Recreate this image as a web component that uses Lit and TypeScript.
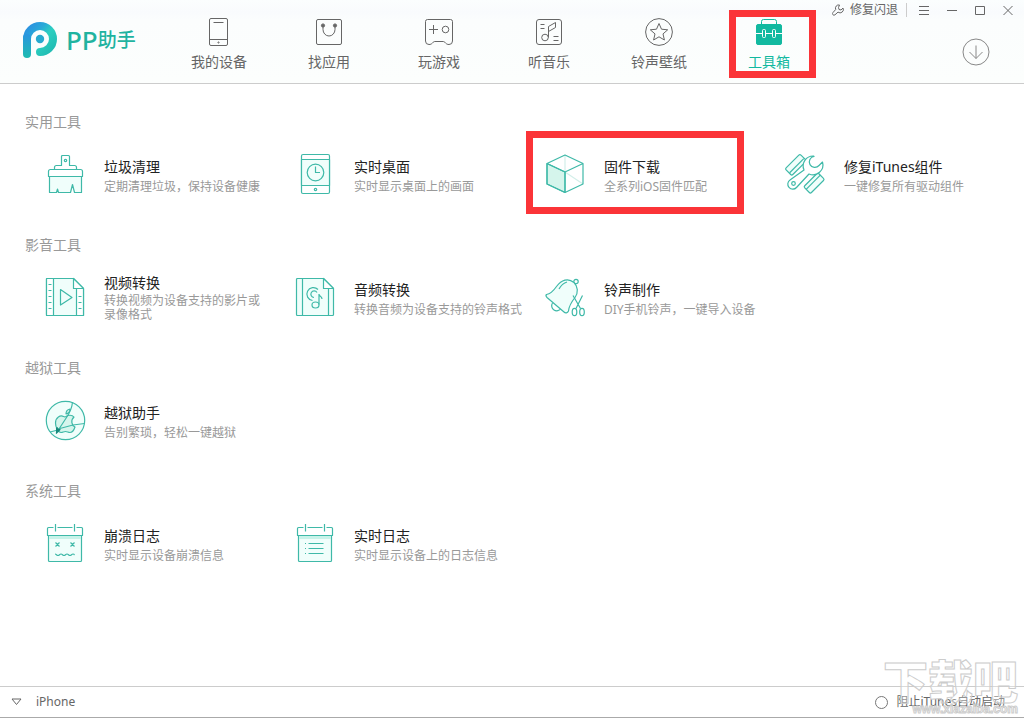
import { LitElement, html, svg, css, nothing } from "lit";
import type { SVGTemplateResult } from "lit";
import { customElement, property, state } from "lit/decorators.js";
import { classMap } from "lit/directives/class-map.js";

/* ---------- icon artwork ---------- */

const navIcons: Record<string, SVGTemplateResult> = {
  device: svg`<rect x="4.5" y=".5" width="18" height="27" rx="1.5"/><path d="M4.5 21.5h18M8.5 4.5h10"/><circle cx="13.5" cy="24.5" r=".6"/>`,
  apps: svg`<rect x="1.5" y="1.5" width="25" height="25" rx="1.5"/><path d="M8 8v3.500a6 6.500 0 0 0 12 0V8"/><circle class="solid" cx="8" cy="7.500" r="1.600"/><circle class="solid" cx="20" cy="7.500" r="1.600"/>`,
  games: svg`<path d="M2.500 1.500h23a2 2 0 0 1 2 2V23a3.500 3.500 0 0 1-3.500 3.500c-1.500 0-2.500-.5-3.500-1.500-.8-1-1.500-1.500-2.500-1.500h-8c-1 0-1.700.5-2.500 1.500-1 1-2 1.500-3.500 1.500A3.500 3.500 0 0 1 .5 23V3.500a2 2 0 0 1 2-2zM4 11.500h9M8.500 7v9"/><circle cx="20.500" cy="11.500" r="3.300"/>`,
  music: svg`<rect x="1.500" y="1.500" width="25" height="25" rx="2.500"/><path d="M13.500 19.500V8.500l7-4v5l-7 4M5.500 6.500h4M5.500 10.500h4M18.500 18.500h5M18.500 22.500h5"/><circle cx="10" cy="19.500" r="3.300"/>`,
  ringtone: svg`<circle cx="14" cy="14" r="13.400"/><path d="M14 5.500l2.500 5.700 6.200.6-4.700 4.100 1.400 6.100-5.400-3.200-5.400 3.200 1.400-6.100-4.700-4.100 6.200-.6z"/>`,
  toolbox: svg`<path d="M6.500 6.500v-3a2 2 0 0 1 2-2h11a2 2 0 0 1 2 2v3"/><rect class="solid" x="1.500" y="6.500" width="25" height="20" rx="1.500"/><path class="cut" d="M1 15.500h6.500M10.500 15.500h7M20.500 15.500H27"/><rect class="cut" x="7.500" y="11.500" width="3" height="8" rx="1"/><rect class="cut" x="17.500" y="11.500" width="3" height="8" rx="1"/>`,
};

const toolIcons: Record<string, SVGTemplateResult> = {
  brush: svg`<path class="tint" d="M5.500 23.500v16h7l1-3.500 1 3.500h12l2-8 2 8h7v-16z"/><path class="paper" d="M17.500 12.500v-9a1 1 0 0 1 1-1h6a1 1 0 0 1 1 1v9h5a2 2 0 0 1 2 2v2h4a2 2 0 0 1 2 2v5h-34v-5a2 2 0 0 1 2-2h4v-2a2 2 0 0 1 2-2zM10.500 16.500h22"/><circle cx="21.500" cy="7.500" r="1.200"/>`,
  desktop: svg`<rect class="paper" x="7.500" y="1.500" width="28" height="39" rx="1.500"/><path class="tint" d="M7.500 6.500h28v26h-28z"/><circle cx="21.500" cy="19.500" r="8.300"/><path d="M21.500 13.500v6h4.500"/><circle cx="21.500" cy="36.500" r="1.200"/>`,
  cube: svg`<path class="faint" d="M21 2v20M21 19l18 12"/><path class="face" d="M3 10.500L21 19v20.500L3 31z"/><path d="M21 2l18 8.500V31l-18 8.500L3 31V10.500zM3 10.500L21 19l18-8.500M21 19v20.500"/>`,
  repair: svg`<g transform="rotate(-45 12 12)"><rect class="tint" x="1.500" y="7" width="21" height="9.500" rx="1.500"/><path d="M2 13h20"/></g><g transform="rotate(-45 31 31)"><rect class="tint" x="21" y="25" width="20" height="9.500" rx="1.500"/><path d="M21 28.500h20"/></g><path class="paper" d="M29.500 3A10 10 0 0 0 20 17L6 27a5 5 0 1 0 6.500 7.500L25 21A10 10 0 0 0 38.500 9l-3.500 3.500a5.500 5.500 0 1 1-5-9z"/><circle cx="9.500" cy="30.500" r="1.800"/>`,
  video: svg`<path class="tint" d="M3.500 2.500h26l10 10v27h-36a1 1 0 0 1-1-1v-35a1 1 0 0 1 1-1z"/><path class="paper" d="M2.500 2.500h7v37h-7zM32.500 12.500h7v27h-7zM29.500 2.500v10h10z"/><path d="M4.500 8.500h3M4.500 14.500h3M4.500 20.500h3M4.500 26.500h3M4.500 32.500h3M34.500 20.500h3M34.500 26.500h3M34.500 32.500h3M16.500 13.500L28 21.500l-11.500 7.500z"/>`,
  audio: svg`<path class="tint" d="M3.500 2.500h26l10 10v26a1 1 0 0 1-1 1h-35a1 1 0 0 1-1-1v-35a1 1 0 0 1 1-1z"/><path class="paper" d="M29.500 2.500v10h10z"/><path d="M8.500 2.500v37M34.500 12.500v27M25 18v10.500M25 18c0 2.500 3 2 3 5M24 13.500a6.500 6.500 0 1 0-5.500 11M23 16.500a3.300 3.300 0 1 0-3 5"/><ellipse cx="21.500" cy="29" rx="3.500" ry="3"/>`,
  bell: svg`<path d="M8.500 27a5 5 0 0 0 8.500 5.500"/><circle cx="32" cy="5.500" r="2.200"/><path class="tint" d="M2.500 18.500c4-.5 6.500-3 10-8C17.500 4 24 1.500 30 6.500c4 4 4.500 10 1 15-4 5-6 8-6.500 13.500-1 2-3 2.500-4.500 1L3 21.500c-1-1-1-2.500-.5-3zM15 13c2-3.500 4.500-6 8-7"/><path class="paper" d="M29 19.500l7.500 13M38.500 19.500L32 32.500"/><ellipse class="paper" cx="30.500" cy="36" rx="2.300" ry="3.700"/><ellipse class="paper" cx="38" cy="36" rx="2.300" ry="3.700"/>`,
  jailbreak: svg`<circle class="tint" cx="21.500" cy="21.500" r="19.200"/><path class="face" d="M22 17.500c2-1.500 6-2 8 .5-3.500 3-2.500 8.500 1 10-1 3-3 5.500-5 5.500-2 0-2.500-1-4.500-1s-2.500 1-4.500 1c-3 0-5.500-5.500-5.500-9.500 0-6 5-8 8-6.500 1 .5 1.800.5 2.500 0zM22 15c0-2.500 1.500-4.500 4-5 0 2.500-1.500 4.500-4 5z"/><path d="M28.500 3c-.5 7-3 11-6 15.500L14 31.500M40.500 24.500L29 26l-15 4M6 33l8-2"/><path class="dark" d="M12 29.500l4 1-4 4M13 28l1 5"/>`,
  crash: svg`<path class="tint" d="M4.500 13.500h33v25a1 1 0 0 1-1 1h-31a1 1 0 0 1-1-1z"/><path class="faceonly" d="M5 14h32v3H5z"/><path class="paper" d="M9.500 5.500h-5a1 1 0 0 0-1 1v7h35v-7a1 1 0 0 0-1-1h-5M13.500 5.500h15M11.500 2v7.500M30.500 2v7.500"/><path d="M11.500 20.500l4 4M15.500 20.500l-4 4M26.500 20.500l4 4M30.500 20.500l-4 4M11 32c1.500 0 1.500 1.500 3 1.500S15.500 32 17 32s1.500 1.500 3 1.500S21.500 32 23 32s1.500 1.500 3 1.500 1.500-1.500 3-1.500 1 .5 1.500 1"/>`,
  log: svg`<path class="tint" d="M4.500 13.500h33v25a1 1 0 0 1-1 1h-31a1 1 0 0 1-1-1z"/><path class="faceonly" d="M5 14h32v3H5z"/><path class="paper" d="M9.500 5.500h-5a1 1 0 0 0-1 1v7h35v-7a1 1 0 0 0-1-1h-5M13.500 5.500h15M11.500 2v7.500M30.500 2v7.500"/><path d="M14.500 21.500h15M14.500 26.500h15M14.500 31.500h15M11 21.500h1M11 26.500h1M11 31.500h1"/>`,
};

/* ---------- data ---------- */

interface Tool {
  icon: string;
  name: string;
  lines: string[];
  marked?: boolean;
}

const navItems = [
  { id: "device", label: "我的设备" },
  { id: "apps", label: "找应用" },
  { id: "games", label: "玩游戏" },
  { id: "music", label: "听音乐" },
  { id: "ringtone", label: "铃声壁纸" },
  { id: "toolbox", label: "工具箱", marked: true },
];

const sections: { title: string; tools: Tool[] }[] = [
  {
    title: "实用工具",
    tools: [
      { icon: "brush", name: "垃圾清理", lines: ["定期清理垃圾，保持设备健康"] },
      { icon: "desktop", name: "实时桌面", lines: ["实时显示桌面上的画面"] },
      { icon: "cube", name: "固件下载", lines: ["全系列iOS固件匹配"], marked: true },
      { icon: "repair", name: "修复iTunes组件", lines: ["一键修复所有驱动组件"] },
    ],
  },
  {
    title: "影音工具",
    tools: [
      { icon: "video", name: "视频转换", lines: ["转换视频为设备支持的影片或", "录像格式"] },
      { icon: "audio", name: "音频转换", lines: ["转换音频为设备支持的铃声格式"] },
      { icon: "bell", name: "铃声制作", lines: ["DIY手机铃声，一键导入设备"] },
    ],
  },
  {
    title: "越狱工具",
    tools: [{ icon: "jailbreak", name: "越狱助手", lines: ["告别繁琐，轻松一键越狱"] }],
  },
  {
    title: "系统工具",
    tools: [
      { icon: "crash", name: "崩溃日志", lines: ["实时显示设备崩溃信息"] },
      { icon: "log", name: "实时日志", lines: ["实时显示设备上的日志信息"] },
    ],
  },
];

/* ---------- one tool entry ---------- */

@customElement("tool-item")
export class ToolItem extends LitElement {
  @property({ attribute: false }) tool!: Tool;

  static styles = css`
    :host {
      display: block;
      position: relative;
    }
    .tool {
      display: flex;
      align-items: center;
      gap: 18px;
      width: 100%;
      height: 80px;
      padding: 0;
      border: 0;
      background: none;
      font: inherit;
      text-align: left;
      cursor: pointer;
    }
    .icon {
      flex: none;
      width: 42px;
      height: 42px;
      fill: none;
      stroke: #3fb9a8;
      stroke-width: 1.2;
      stroke-linejoin: round;
    }
    .tint { fill: #f0fefb; }
    .paper { fill: #fff; }
    .face { fill: #d5f5ec; }
    .faceonly { fill: #c8f3e9; stroke: none; }
    .faint { stroke: #d3efe9; }
    .dark { fill: #16897b; stroke: #16897b; }
    .copy {
      display: flex;
      flex-direction: column;
      white-space: nowrap;
    }
    .copy.short {
      gap: 2px;
      padding-top: 2px;
    }
    .name {
      font-size: 14px;
      line-height: 22px;
      color: #222;
    }
    .desc {
      font-size: 12px;
      line-height: 14px;
      color: #999;
    }
    .mark {
      position: absolute;
      inset: -3px 40px 0 -18px;
      border: 7px solid #fb3438;
      pointer-events: none;
    }
  `;

  render() {
    const { icon, name, lines, marked } = this.tool;
    return html`
      <button class="tool" type="button">
        <svg class="icon" viewBox="0 0 42 42" aria-hidden="true">${toolIcons[icon]}</svg>
        <span class=${classMap({ copy: true, short: lines.length === 1 })}>
          <span class="name">${name}</span>
          ${lines.map((line) => html`<span class="desc">${line}</span>`)}
        </span>
      </button>
      ${marked ? html`<span class="mark"></span>` : nothing}
    `;
  }
}

/* ---------- window ---------- */

@customElement("app-root")
export class AppRoot extends LitElement {
  @state() private current = "toolbox";

  static styles = css`
    :host {
      display: flex;
      flex-direction: column;
      box-sizing: border-box;
      min-height: 100vh;
      padding-bottom: 1px;
      background: #fff;
      font-family: "Noto Sans", "Noto Sans CJK SC", sans-serif;
      color: #666;
    }
    button {
      padding: 0;
      border: 0;
      background: none;
      font: inherit;
      color: inherit;
      cursor: pointer;
    }
    svg {
      display: block;
      fill: none;
      stroke: currentColor;
    }
    .header {
      display: flex;
      height: 83px;
      border-bottom: 1px solid #ccc;
      background: linear-gradient(#fbfefe, #f9fbfd 12px, #fbfdfd 20px, #fcfefd);
    }
    .brand {
      display: flex;
      align-items: center;
      gap: 8px;
      box-sizing: border-box;
      width: 164px;
      padding: 0 0 4px 22px;
      color: #1fb3a0;
      font-size: 19px;
      font-weight: 500;
      line-height: 28px;
    }
    .wordmark {
      display: flex;
      align-items: center;
      white-space: nowrap;
    }
    .latin {
      font-size: 26px;
      font-weight: 500;
    }
    .nav {
      display: flex;
    }
    .link {
      position: relative;
      display: flex;
      flex-direction: column;
      align-items: center;
      gap: 6px;
      box-sizing: border-box;
      width: 110px;
      padding-top: 18px;
      font-size: 14px;
      line-height: 20px;
      color: #666;
      text-decoration: none;
    }
    .link.on { color: #12b9a0; }
    .solid { fill: currentColor; }
    .cut { stroke: #fff; }
    .mark {
      position: absolute;
      inset: 10px 8px 5px 15px;
      border: 7px solid #fb3438;
      pointer-events: none;
    }
    .side {
      display: flex;
      flex: 1;
      flex-direction: column;
      align-items: flex-end;
      gap: 18px;
    }
    .titlebar {
      display: flex;
      align-items: center;
      height: 20px;
      padding-right: 2px;
      font-size: 12px;
    }
    .fix {
      display: flex;
      align-items: center;
      gap: 6px;
      padding-right: 8px;
      line-height: 20px;
    }
    .rule {
      width: 1px;
      height: 14px;
      margin-right: 3px;
      background: #ccc;
    }
    .win {
      display: grid;
      place-items: center;
      width: 28px;
      height: 20px;
    }
    .download {
      margin-right: 34px;
      color: #888;
    }
    .main {
      flex: 1;
      padding: 26px 25px;
    }
    .section + .section { margin-top: 19px; }
    .heading {
      margin: 0;
      font-size: 14px;
      font-weight: 400;
      line-height: 24px;
      color: #999;
    }
    .grid {
      display: grid;
      grid-template-columns: 250px 250px 240px 1fr;
      padding-left: 19px;
    }
    .footer {
      position: relative;
      display: flex;
      align-items: center;
      justify-content: space-between;
      height: 30px;
      padding: 0 19px 0 11px;
      border-top: 1px solid #ccc;
      border-bottom: 1px solid #aaa;
      font-size: 12px;
      line-height: 20px;
    }
    .picker {
      display: flex;
      align-items: center;
      gap: 14px;
    }
    .block {
      display: flex;
      align-items: center;
      gap: 8px;
    }
    .radio {
      appearance: none;
      width: 13px;
      height: 13px;
      margin: 0;
      border: 1px solid #777;
      border-radius: 50%;
      background: #fff;
    }
    .watermark {
      position: absolute;
      right: 6px;
      bottom: 2px;
      display: flex;
      flex-direction: column;
      align-items: flex-end;
      color: rgba(255, 255, 255, 0.3);
      -webkit-text-stroke: 1px #ccc;
      pointer-events: none;
    }
    .big {
      font-size: 45px;
      font-weight: 900;
      line-height: 42px;
    }
    .url {
      font-family: "Liberation Sans", sans-serif;
      font-size: 12px;
      font-weight: 700;
      line-height: 12px;
    }
  `;

  private select(event: Event, id: string) {
    event.preventDefault();
    this.current = id;
  }

  private renderHeader() {
    return html`
      <header class="header">
        <div class="brand">
          <svg width="36" height="38" viewBox="22 21 36 38" aria-hidden="true">
            <defs>
              <linearGradient id="blue-teal" gradientUnits="userSpaceOnUse" x1="26" y1="26" x2="52" y2="50">
                <stop offset="0" stop-color="#2b8ee2" />
                <stop offset=".35" stop-color="#28a9d8" />
                <stop offset=".6" stop-color="#2ccfc0" />
                <stop offset="1" stop-color="#22bdb4" />
              </linearGradient>
              <linearGradient id="stem" gradientUnits="userSpaceOnUse" x1="0" y1="34" x2="0" y2="56">
                <stop offset="0" stop-color="#2a94e0" />
                <stop offset="1" stop-color="#1fb9b4" />
              </linearGradient>
            </defs>
            <path d="M27 39a13 13 0 1 1 13 13" stroke="url(#blue-teal)" stroke-width="8" stroke-linecap="round" />
            <path d="M27 38v16" stroke="url(#stem)" stroke-width="8" stroke-linecap="round" />
            <circle cx="40" cy="39" r="4.2" fill="#27a9cf" stroke="none" />
          </svg>
          <span class="wordmark"><span class="latin">PP</span>助手</span>
        </div>
        <nav class="nav">
          ${navItems.map(
            (item) => html`
              <a
                class=${classMap({ link: true, on: item.id === this.current })}
                href="#${item.id}"
                @click=${(e: Event) => this.select(e, item.id)}
              >
                <svg width="28" height="28" viewBox="0 0 28 28" aria-hidden="true">${navIcons[item.id]}</svg>
                <span>${item.label}</span>
                ${item.marked ? html`<span class="mark"></span>` : nothing}
              </a>
            `
          )}
        </nav>
        <div class="side">
          <div class="titlebar">
            <button class="fix" type="button">
              <svg width="12" height="12" viewBox="0 0 12 12" aria-hidden="true">
                <path d="M7.500 1a3.300 3.300 0 0 0-3.800 4.500L1 8.500a1.400 1.400 0 0 0 2 2.300l3-2.700A3.300 3.300 0 0 0 11 4L9 6 7 5.500 6.500 3.500z" stroke-linejoin="round" />
              </svg>
              <span>修复闪退</span>
            </button>
            <span class="rule"></span>
            <button class="win" type="button" aria-label="菜单">
              <svg width="10" height="10" viewBox="0 0 10 10"><path d="M0 1.500h10M0 5.500h10M0 9.500h10" /></svg>
            </button>
            <button class="win" type="button" aria-label="最小化">
              <svg width="10" height="10" viewBox="0 0 10 10"><path d="M0 5.500h10" /></svg>
            </button>
            <button class="win" type="button" aria-label="最大化">
              <svg width="10" height="10" viewBox="0 0 10 10"><path d="M.5 1.500h9v8h-9z" /></svg>
            </button>
            <button class="win" type="button" aria-label="关闭">
              <svg width="10" height="10" viewBox="0 0 10 10"><path d="M.5 1l9 9M9.500 1l-9 9" /></svg>
            </button>
          </div>
          <button class="download" type="button" aria-label="下载">
            <svg width="28" height="28" viewBox="0 0 28 28">
              <circle cx="14" cy="14" r="13" />
              <path d="M14 7.500v13M7.500 14l6.500 6.500 6.500-6.500" />
            </svg>
          </button>
        </div>
      </header>
    `;
  }

  render() {
    return html`
      ${this.renderHeader()}
      <main class="main">
        ${sections.map(
          (section) => html`
            <section class="section">
              <h2 class="heading">${section.title}</h2>
              <div class="grid">
                ${section.tools.map((tool) => html`<tool-item .tool=${tool}></tool-item>`)}
              </div>
            </section>
          `
        )}
      </main>
      <footer class="footer">
        <button class="picker" type="button">
          <svg width="11" height="8" viewBox="0 0 11 8" aria-hidden="true"><path d="M1 1h9L5.500 6.500z" /></svg>
          <span>iPhone</span>
        </button>
        <label class="block" for="block-itunes">
          <input class="radio" id="block-itunes" type="radio" name="block-itunes" />
          <span>阻止iTunes自动启动</span>
        </label>
        <div class="watermark" aria-hidden="true">
          <span class="big">下载吧</span>
          <span class="url">www.xiazaiba.com</span>
        </div>
      </footer>
    `;
  }
}
